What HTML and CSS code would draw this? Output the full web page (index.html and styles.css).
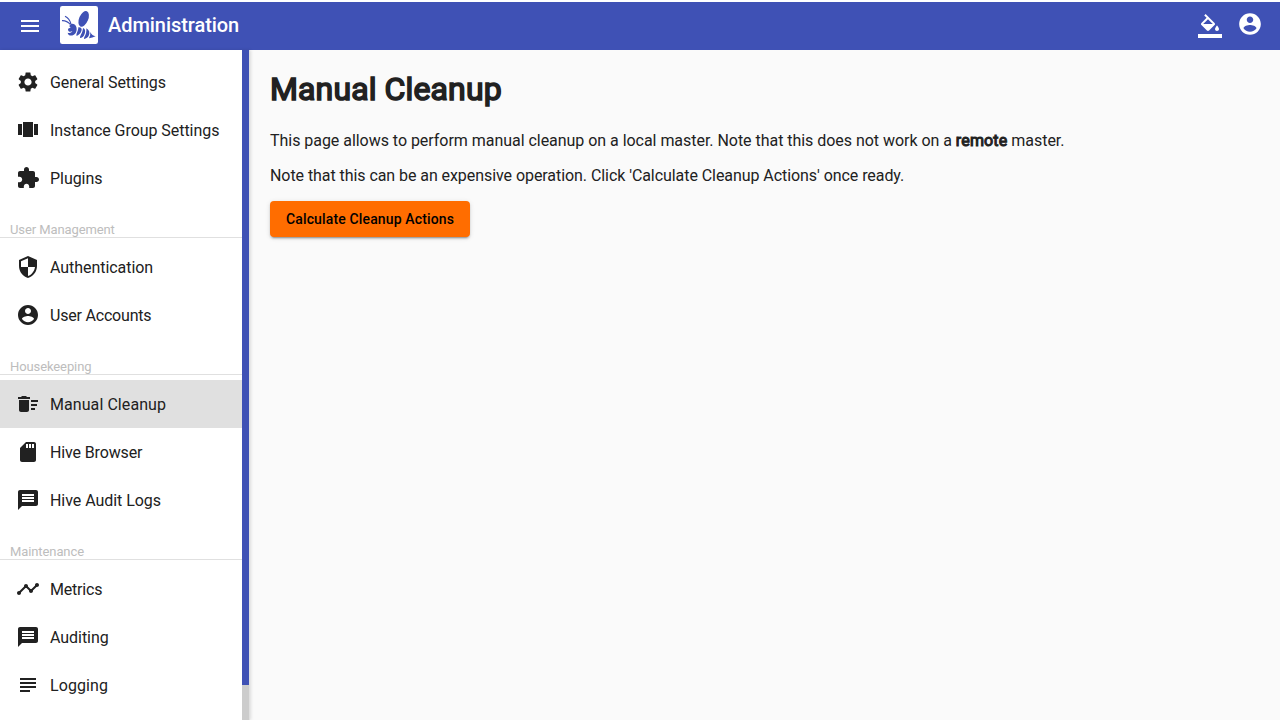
FILE: index.html
```html
<!DOCTYPE html>
<html lang="en">
<head>
<meta charset="utf-8">
<title>Administration</title>
<link rel="stylesheet" href="styles.css">
</head>
<body>
<svg class="defs" aria-hidden="true">
  <symbol id="account" viewBox="0 0 24 24"><path d="M12 2C6.480 2 2 6.480 2 12s4.480 10 10 10 10-4.480 10-10S17.520 2 12 2zm0 3c1.660 0 3 1.340 3 3s-1.340 3-3 3-3-1.340-3-3 1.340-3 3-3zm0 14.200c-2.500 0-4.710-1.280-6-3.220.030-1.990 4-3.080 6-3.080 1.990 0 5.970 1.090 6 3.080-1.290 1.940-3.500 3.220-6 3.220z"/></symbol>
  <symbol id="message" viewBox="0 0 24 24"><path d="M20 2H4c-1.100 0-1.990.900-1.990 2L2 22l4-4h14c1.100 0 2-.900 2-2V4c0-1.100-.900-2-2-2zm-2 12H6v-2h12v2zm0-3H6V9h12v2zm0-3H6V6h12v2z"/></symbol>
</svg>
<header class="toolbar">
  <svg class="icon menu" viewBox="0 0 24 24"><path d="M3 18h18v-2H3v2zm0-5h18v-2H3v2zm0-7v2h18V6H3z"/></svg>
  <svg class="logo" viewBox="0 0 114 114">
    <rect width="114" height="114" rx="7" fill="#fff"/>
    <ellipse cx="71" cy="38.500" rx="13.500" ry="25" transform="rotate(23 71 38.500)"/>
    <path d="M6 44Q20 43 31 55M15 31Q28 37 33 54" fill="none" stroke="#3f51b5" stroke-width="3.400"/>
    <path d="M30 56C36 51 46 54 49 63C52 73 48 84 40 87C33 91 24 88 23 80C31 82 36 79 37 75C32 79 24 77 24 71C24 67 28 66 33 66C29 64 27 60 30 56Z"/>
    <path d="M55 64C61 63 66 67 65 72C63 82 57 87 50 90C47 83 55 76 55 64Z"/>
    <path d="M69 66C77 69 76 77 74 83C71 92 66 95 60 96C59 89 68 82 69 66Z"/>
    <path d="M79 67C88 72 90 80 87 87C84 95 79 98 72 99C71 93 81 86 79 67Z"/>
    <path d="M91 78Q96 89 107 91Q97 96 87 97Q92 88 91 78Z"/>
  </svg>
  <h1 class="brand">Administration</h1>
  <svg class="icon theme" viewBox="0 0 24 24"><path d="M16.560 8.940L7.620 0 6.210 1.410l2.380 2.380-5.150 5.150c-.590.590-.590 1.540 0 2.120l5.500 5.500c.290.290.680.440 1.060.440s.770-.150 1.060-.440l5.500-5.500c.590-.580.590-1.530 0-2.120zM5.210 10L10 5.210 14.790 10H5.210zM19 11.500s-2 2.170-2 3.500c0 1.100.900 2 2 2s2-.900 2-2c0-1.330-2-3.500-2-3.500zM0 20h24v4H0z"/></svg>
  <svg class="icon user"><use href="#account"/></svg>
</header>
<div class="layout">
  <aside class="sidebar">
    <nav class="nav">
      <a class="item"><svg class="icon" viewBox="0 0 24 24"><path d="M19.140 12.940c.040-.300.060-.610.060-.940 0-.320-.020-.640-.070-.940l2.030-1.580c.180-.140.230-.410.120-.610l-1.920-3.320c-.120-.220-.370-.290-.590-.220l-2.390.960c-.500-.380-1.030-.700-1.620-.940l-.360-2.540c-.040-.240-.240-.410-.480-.410h-3.840c-.240 0-.430.170-.470.410l-.360 2.540c-.590.240-1.130.570-1.620.940l-2.390-.960c-.220-.080-.470 0-.590.220L2.740 8.870c-.120.210-.080.470.120.610l2.030 1.580c-.050.300-.090.630-.090.940s.020.640.070.940l-2.030 1.580c-.180.140-.230.410-.120.610l1.920 3.320c.120.220.370.290.590.220l2.390-.960c.500.380 1.030.700 1.620.940l.360 2.540c.050.240.240.410.480.410h3.840c.240 0 .440-.170.470-.410l.360-2.540c.590-.240 1.130-.560 1.620-.940l2.390.960c.220.080.470 0 .590-.220l1.920-3.320c.120-.220.070-.470-.120-.610l-2.010-1.580zM12 15.600c-1.980 0-3.600-1.620-3.600-3.600s1.620-3.600 3.600-3.600 3.600 1.620 3.600 3.600-1.620 3.600-3.600 3.600z"/></svg>General Settings</a>
      <a class="item"><svg class="icon" viewBox="0 0 24 24"><path d="M7 19h10V4H7v15zm-5-2h4V6H2v11zM18 6v11h4V6h-4z"/></svg>Instance Group Settings</a>
      <a class="item"><svg class="icon" viewBox="0 0 24 24"><path d="M20.500 11H19V7c0-1.100-.900-2-2-2h-4V3.500C13 2.120 11.880 1 10.500 1S8 2.120 8 3.500V5H4c-1.100 0-1.990.900-1.990 2v3.800H3.500c1.490 0 2.700 1.210 2.700 2.700s-1.210 2.700-2.700 2.700H2V20c0 1.100.900 2 2 2h3.800v-1.500c0-1.490 1.210-2.700 2.700-2.700 1.490 0 2.700 1.210 2.700 2.700V22H17c1.100 0 2-.900 2-2v-4h1.500c1.380 0 2.500-1.120 2.500-2.500S21.880 11 20.500 11z"/></svg>Plugins</a>
      <h2 class="group">User Management</h2>
      <a class="item"><svg class="icon" viewBox="0 0 24 24"><path d="M12 1L3 5v6c0 5.550 3.840 10.740 9 12 5.160-1.260 9-6.450 9-12V5l-9-4zm0 10.990h7c-.530 4.120-3.280 7.790-7 8.940V12H5V6.300l7-3.110v8.800z"/></svg>Authentication</a>
      <a class="item tight"><svg class="icon"><use href="#account"/></svg>User Accounts</a>
      <h2 class="group">Housekeeping</h2>
      <a class="item active"><svg class="icon" viewBox="0 0 24 24"><path d="M15 16h4v2h-4zm0-8h7v2h-7zm0 4h6v2h-6zM3 18c0 1.100.900 2 2 2h6c1.100 0 2-.900 2-2V8H3v10zM14 5h-3l-1-1H6L5 5H2v2h12z"/></svg>Manual Cleanup</a>
      <a class="item"><svg class="icon" viewBox="0 0 24 24"><path d="M18 2h-8L4.020 8 4 20c0 1.100.900 2 2 2h12c1.100 0 2-.900 2-2V4c0-1.100-.900-2-2-2zm-6 6h-2V4h2v4zm3 0h-2V4h2v4zm3 0h-2V4h2v4z"/></svg><span class="hive">Hive Browser</span></a>
      <a class="item"><svg class="icon"><use href="#message"/></svg>Hive Audit Logs</a>
      <h2 class="group">Maintenance</h2>
      <a class="item tight"><svg class="icon" viewBox="0 0 24 24"><path d="M23 8c0 1.100-.900 2-2 2-.180 0-.350-.020-.510-.070l-3.560 3.550c.050.160.070.340.070.520 0 1.100-.900 2-2 2s-2-.900-2-2c0-.180.020-.360.070-.520l-2.550-2.550c-.160.050-.340.070-.520.070s-.360-.020-.520-.070l-4.550 4.560c.050.160.070.330.070.510 0 1.100-.900 2-2 2s-2-.900-2-2 .900-2 2-2c.180 0 .350.020.510.070l4.560-4.550C8.020 9.360 8 9.180 8 9c0-1.100.900-2 2-2s2 .900 2 2c0 .180-.020.360-.070.520l2.550 2.550c.160-.050.340-.070.520-.070s.360.020.520.070l3.550-3.560C19.020 8.350 19 8.180 19 8c0-1.100.900-2 2-2s2 .900 2 2z"/></svg>Metrics</a>
      <a class="item"><svg class="icon"><use href="#message"/></svg>Auditing</a>
      <a class="item loose"><svg class="icon" viewBox="0 0 24 24"><path d="M4 5h16v2H4zM4 9h16v2H4zM4 13h16v2H4zM4 17h10v2H4z"/></svg>Logging</a>
    </nav>
    <div class="scrollbar"><div class="thumb"></div></div>
  </aside>
  <main class="content">
    <h1 class="title">Manual Cleanup</h1>
    <p class="text intro">This page allows to perform manual cleanup on a local master. Note that this does not work on a <strong class="strong">remote</strong> master.</p>
    <p class="text note">Note that this can be an expensive operation. Click 'Calculate Cleanup Actions' once ready.</p>
    <button class="button">Calculate Cleanup Actions</button>
  </main>
</div>
</body>
</html>
```
FILE: styles.css
```css
* { box-sizing: border-box; }
body {
  margin: 0;
  padding-top: 2px;
  height: 720px;
  display: flex;
  flex-direction: column;
  overflow: hidden;
  background: #fff;
  color: #212121;
  font: 400 16px Roboto, sans-serif;
}
.defs { display: none; }
.icon { width: 24px; height: 24px; flex: none; fill: currentColor; }
.toolbar {
  height: 48px;
  flex: none;
  display: flex;
  align-items: center;
  padding: 0 17px 0 18px;
  background: #3f51b5;
  color: #fff;
}
.logo { width: 38px; height: 38px; margin: 0 10px 2px 18px; fill: #3f51b5; }
.brand { flex: 1; margin: 0 0 2px; font-size: 20px; font-weight: 500; line-height: 32px; letter-spacing: -.06px; }
.theme { margin-right: 15px; }
.user { width: 26px; height: 26px; margin-bottom: 4px; }
.layout { flex: 1; min-height: 0; display: flex; background: #fafafa; }
.sidebar {
  width: 250px;
  flex: none;
  display: flex;
  background: #fff;
  border-right: 1px solid #e0e0e0;
  box-shadow: 1px 0 3px rgba(0, 0, 0, .12);
}
.nav { flex: 1; min-width: 0; padding-top: 8px; overflow: hidden; }
.item {
  height: 48px;
  display: flex;
  align-items: center;
  gap: 10px;
  padding-left: 16px;
  white-space: nowrap;
  letter-spacing: -.05px;
}
.tight { letter-spacing: -.2px; }
.loose { letter-spacing: .1px; }
.hive { letter-spacing: -.14px; }
.item .icon { color: #212121; }
.active { background: #e0e0e0; letter-spacing: .07px; }
.group {
  margin: 20px 0 5px;
  height: 16px;
  padding-left: 10px;
  border-bottom: 1px solid #e0e0e0;
  color: #bdbdbd;
  font-size: 13px;
  font-weight: 400;
  line-height: 15px;
  letter-spacing: -.1px;
}
.scrollbar { width: 7px; background: #ccc; }
.thumb { height: 635px; background: #3f51b5; }
.content { flex: 1; padding: 20px; }
.title {
  margin: 0 0 21px;
  font-size: 32px;
  font-weight: 400;
  line-height: 39px;
  height: 38px;
  letter-spacing: .12px;
  -webkit-text-stroke: 1.600px currentColor;
}
.text { margin: 0 0 12px; line-height: 23px; }
.intro { letter-spacing: -.036px; }
.note { margin-bottom: 14px; letter-spacing: -.064px; }
.strong { font-weight: 400; letter-spacing: .15px; -webkit-text-stroke: 1px currentColor; }
.button {
  height: 36px;
  padding: 0 16px;
  border: 0;
  border-radius: 4px;
  background: #ff6d00;
  color: #000;
  font: 500 14px/36px Roboto, sans-serif;
  letter-spacing: .14px;
  box-shadow: 0 3px 1px -2px rgba(0,0,0,.2), 0 2px 2px rgba(0,0,0,.14), 0 1px 5px rgba(0,0,0,.12);
}
```
